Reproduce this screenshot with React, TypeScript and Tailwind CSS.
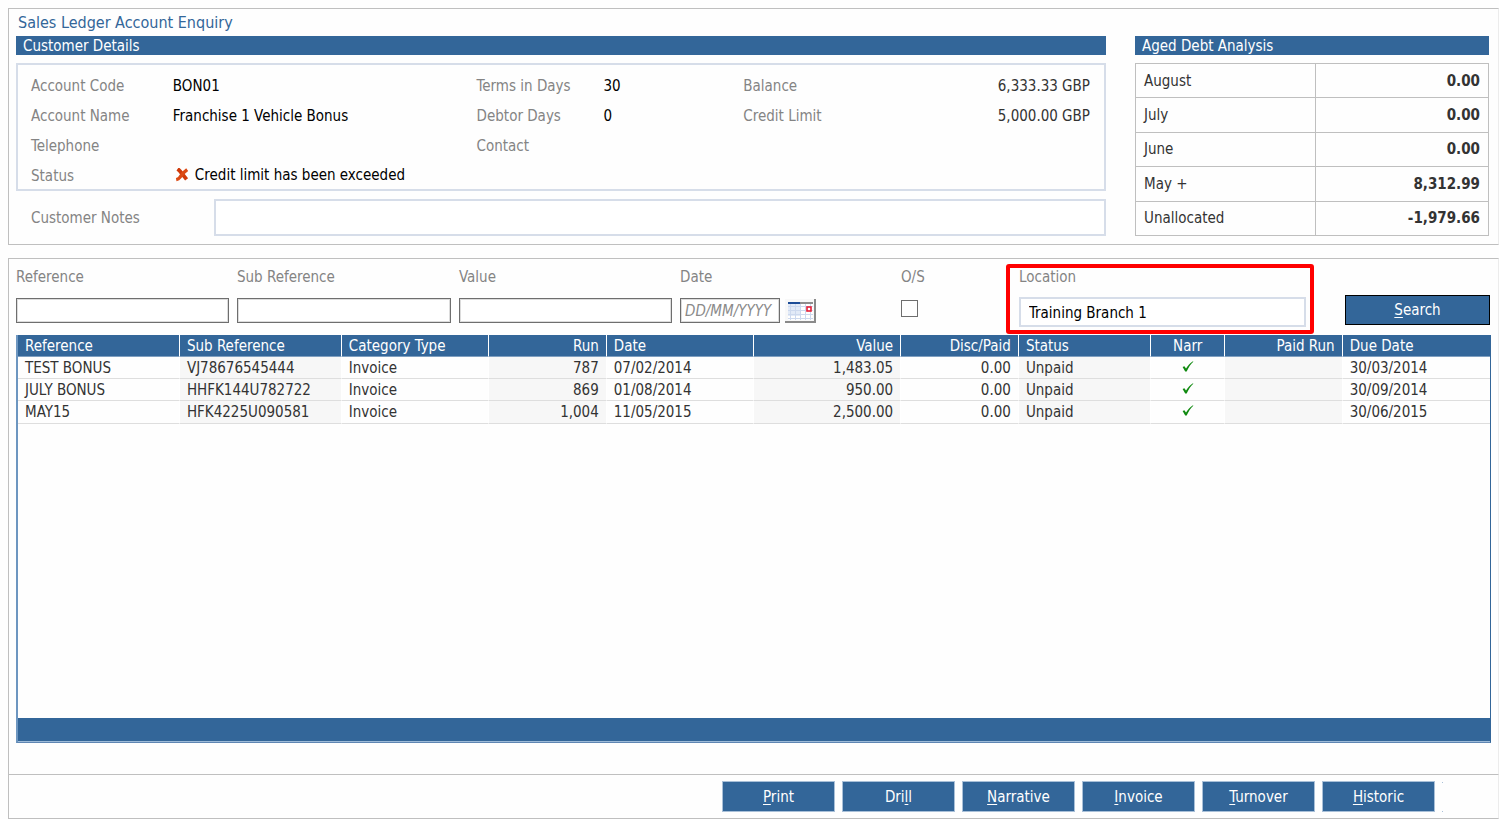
import React from "react";

type Row = {
  reference: string;
  sub: string;
  category: string;
  run: string;
  date: string;
  value: string;
  disc: string;
  status: string;
  due: string;
};

const rows: Row[] = [
  { reference: "TEST BONUS", sub: "VJ78676545444", category: "Invoice", run: "787", date: "07/02/2014", value: "1,483.05", disc: "0.00", status: "Unpaid", due: "30/03/2014" },
  { reference: "JULY BONUS", sub: "HHFK144U782722", category: "Invoice", run: "869", date: "01/08/2014", value: "950.00", disc: "0.00", status: "Unpaid", due: "30/09/2014" },
  { reference: "MAY15", sub: "HFK4225U090581", category: "Invoice", run: "1,004", date: "11/05/2015", value: "2,500.00", disc: "0.00", status: "Unpaid", due: "30/06/2015" },
];

const columns: { title: string; width: string; align: string }[] = [
  { title: "Reference", width: "w-[11%]", align: "text-left" },
  { title: "Sub Reference", width: "w-[11%]", align: "text-left" },
  { title: "Category Type", width: "w-[10%]", align: "text-left" },
  { title: "Run", width: "w-[8%]", align: "text-right" },
  { title: "Date", width: "w-[10%]", align: "text-left" },
  { title: "Value", width: "w-[10%]", align: "text-right" },
  { title: "Disc/Paid", width: "w-[8%]", align: "text-right" },
  { title: "Status", width: "w-[9%]", align: "text-left" },
  { title: "Narr", width: "w-[5%]", align: "text-center" },
  { title: "Paid Run", width: "w-[8%]", align: "text-right" },
  { title: "Due Date", width: "w-[10%]", align: "text-left" },
];

const agedDebt = [
  ["August", "0.00"],
  ["July", "0.00"],
  ["June", "0.00"],
  ["May +", "8,312.99"],
  ["Unallocated", "-1,979.66"],
];

const actions: [string, string, string][] = [
  ["", "P", "rint"],
  ["Dri", "l", "l"],
  ["", "N", "arrative"],
  ["", "I", "nvoice"],
  ["", "T", "urnover"],
  ["", "H", "istoric"],
];

function Cross() {
  return (
    <svg viewBox="0 0 14 14" className="h-[14px] w-[14px]" aria-hidden="true">
      <path d="M2.6 0.9 Q5 2.6 6.6 5.2 L11.6 11.4" stroke="#cf3a0a" strokeWidth="3.8" fill="none" />
      <path d="M12.2 1.6 Q7.4 5 4.8 9.4 Q3.6 11.2 1.2 11.6" stroke="#dc4a14" strokeWidth="3.4" fill="none" />
    </svg>
  );
}

function Tick() {
  return (
    <svg viewBox="0 0 12 11" className="mx-auto mb-[3px] block h-[11px] w-[12px]" role="img" aria-label="Yes">
      <path d="M0.6 6.1 L2.4 5.3 L4 7.6 C5.8 4.6 8 2.1 11 0.3 L11.3 0.7 C8.6 3.2 6.4 6.6 4.7 10.5 L3.2 10.5 Z" fill="#108a10" />
    </svg>
  );
}

function Calendar() {
  return (
    <svg viewBox="0 0 31 24" className="block h-[24px] w-[31px]" aria-hidden="true">
      <rect width="31" height="24" fill="#f8f8f8" />
      <rect x="3" y="5" width="25" height="16" fill="#ffffff" />
      <rect x="3" y="5" width="12" height="12" fill="#e2eaf7" />
      <path d="M5.5 5v16M10.5 5v16M15.5 5v16M20.5 5v16M25.5 5v16M3 7.5h25M3 11.5h25M3 15.5h25M3 19.5h25" stroke="#cdd9ee" strokeWidth="1" />
      <rect x="3" y="3" width="12" height="2" fill="#1c4c96" />
      <rect x="15" y="3" width="13" height="2" fill="#8c8c8c" />
      <rect x="22" y="8" width="4" height="4" fill="#fff" stroke="#e42038" strokeWidth="1.6" />
      <path d="M30 0v23M0 23h31" stroke="#8a8a8a" strokeWidth="2" />
    </svg>
  );
}

function Label({ htmlFor, children }: { htmlFor: string; children: React.ReactNode }) {
  return (
    <label htmlFor={htmlFor} className="block h-[20px] leading-[20px] text-[#848484]">
      {children}
    </label>
  );
}

const textBox = "block h-[25px] w-full border border-[#6e6e6e] bg-white px-1 outline-none inset-shadow-[0_0_0_1px_#dcdcdc]";

export default function App() {
  return (
    <main className="min-h-screen bg-[#fefefe] pt-2 pl-2 font-['DejaVu_Sans_Condensed','Noto_Sans',sans-serif] text-[15px] leading-[20px] text-[#333333]">
      <section className="border border-[#bfbfbf] border-r-[#ececec] pt-[4px] pr-[9px] pb-[8px] pl-[7px]">
        <h1 className="h-[23px] pl-[2px] text-[16px] leading-[20px] text-[#336699]">Sales Ledger Account Enquiry</h1>
        <div className="flex gap-[29px]">
          <div className="min-w-0 flex-1">
            <h2 className="h-[19px] bg-[#336699] pl-[7px] leading-[20px] text-white">Customer Details</h2>
            <dl className="mt-[8px] grid h-[128px] grid-cols-[142fr_304fr_127fr_140fr_140fr_207fr] grid-rows-[30px_30px_30px_30px] items-center border-2 border-[#d6dde9] pt-[6px] pr-[14px] pl-[13px] text-[#848484]">
              <dt>Account Code</dt>
              <dd className="text-black">BON01</dd>
              <dt>Terms in Days</dt>
              <dd className="text-black">30</dd>
              <dt>Balance</dt>
              <dd className="text-right text-[#333333]">6,333.33 GBP</dd>
              <dt>Account Name</dt>
              <dd className="text-black">Franchise 1 Vehicle Bonus</dd>
              <dt>Debtor Days</dt>
              <dd className="text-black">0</dd>
              <dt>Credit Limit</dt>
              <dd className="text-right text-[#333333]">5,000.00 GBP</dd>
              <dt>Telephone</dt>
              <dd />
              <dt>Contact</dt>
              <dd className="col-span-3" />
              <dt>Status</dt>
              <dd className="col-span-5 flex items-center gap-[6px] pb-[2px] pl-[2px] text-black">
                <Cross />
                Credit limit has been exceeded
              </dd>
            </dl>
            <div className="mt-[8px] flex items-center pl-[15px]">
              <label htmlFor="notes" className="w-[183px] text-[#848484]">Customer Notes</label>
              <input id="notes" className="h-[37px] min-w-0 flex-1 border-2 border-[#d6dde9] bg-white px-2 outline-none" />
            </div>
          </div>
          <div className="w-[354px]">
            <h2 className="h-[19px] bg-[#336699] pl-[7px] leading-[20px] text-white">Aged Debt Analysis</h2>
            <table className="mt-[8px] h-[173px] w-full table-fixed border-collapse">
              <tbody>
                {agedDebt.map(([label, amount]) => (
                  <tr key={label}>
                    <th scope="row" className="w-[51%] border border-[#bfbfbf] pl-[8px] text-left font-normal">{label}</th>
                    <td className="border border-[#bfbfbf] pr-[8px] text-right font-bold">{amount}</td>
                  </tr>
                ))}
              </tbody>
            </table>
          </div>
        </div>
      </section>

      <section className="mt-[13px] border-t border-r border-l border-[#bfbfbf] border-r-[#ececec] pt-[8px] pr-[7px] pb-[31px] pl-[7px]">
        <form className="grid h-[68px] grid-cols-[221fr_222fr_221fr_221fr_118fr_326fr_145fr] pr-px" onSubmit={(e) => e.preventDefault()}>
          <div className="min-w-0 pr-[8px]">
            <Label htmlFor="ref">Reference</Label>
            <input id="ref" className={`mt-[11px] ${textBox}`} />
          </div>
          <div className="min-w-0 pr-[8px]">
            <Label htmlFor="sub">Sub Reference</Label>
            <input id="sub" className={`mt-[11px] ${textBox}`} />
          </div>
          <div className="min-w-0 pr-[8px]">
            <Label htmlFor="val">Value</Label>
            <input id="val" className={`mt-[11px] ${textBox}`} />
          </div>
          <div className="min-w-0">
            <Label htmlFor="date">Date</Label>
            <div className="mt-[11px] flex gap-[5px]">
              <input id="date" placeholder="DD/MM/YYYY" className="h-[25px] w-[100px] border border-[#6e6e6e] bg-white px-[4px] outline-none inset-shadow-[0_0_0_1px_#dcdcdc] placeholder:text-[#8a8a8a] placeholder:italic" />
              <button type="button" aria-label="Choose date"><Calendar /></button>
            </div>
          </div>
          <div className="min-w-0">
            <Label htmlFor="os">O/S</Label>
            <input id="os" type="checkbox" className="mt-[13px] block h-[17px] w-[17px] appearance-none border border-[#6e6e6e] bg-white" />
          </div>
          <div className="relative min-w-0 pr-[39px]">
            <Label htmlFor="loc">Location</Label>
            <input id="loc" defaultValue="Training Branch 1" className="mt-[10px] block h-[30px] w-full border-2 border-[#d6dde9] bg-white px-[8px] pt-[2px] text-black outline-none" />
            <div className="pointer-events-none absolute -top-[3px] right-[31px] -left-[13px] h-[70px] rounded-[3px] border-4 border-[#ff0000]" />
          </div>
          <button type="submit" className="mt-[28px] h-[30px] border border-black bg-[#336699] text-white">
            <u className="underline-offset-2">S</u>earch
          </button>
        </form>

        <div className="flex h-[408px] flex-col border-r border-b border-l-2 border-r-[#336699] border-b-[#5f86b3] border-l-[#6d96c0] bg-[#fefefe]">
          <table className="w-full table-fixed border-separate border-spacing-0">
            <thead>
              <tr className="h-[22px] bg-[#336699] text-white">
                {columns.map((c) => (
                  <th key={c.title} scope="col" className={`${c.width} ${c.align} border-r border-b border-r-white border-b-[#7f9fc0] px-[7px] font-normal whitespace-nowrap last:border-r-0`}>
                    {c.title}
                  </th>
                ))}
              </tr>
            </thead>
            <tbody>
              {rows.map((r) => {
                const cells = [r.reference, r.sub, r.category, r.run, r.date, r.value, r.disc, r.status, <Tick />, "", r.due];
                return (
                  <tr key={r.reference} className="h-[22px] last:h-[23px]">
                    {cells.map((cell, i) => (
                      <td key={i} className={`${columns[i].align} border-r border-b border-r-white border-b-[#dedede] px-[7px] whitespace-nowrap last:border-r-0 even:bg-[#f7f7f7]`}>
                        {cell}
                      </td>
                    ))}
                  </tr>
                );
              })}
            </tbody>
          </table>
          <div className="mt-auto h-[24px] border-b border-[#9dbbd8] bg-[#336699]" />
        </div>
      </section>

      <footer className="flex h-[45px] items-center justify-end gap-[7px] border border-[#bfbfbf] border-r-[#ececec] pr-[55px]">
        {actions.map(([before, key, after]) => (
          <button key={key + after} type="button" className="h-[31px] w-[113px] border border-[#a9c0d8] bg-[#336699] text-white">
            {before}
            <u className="underline-offset-2">{key}</u>
            {after}
          </button>
        ))}
        <div className="h-[30px] w-px border-y border-[#a9c0d8]" />
      </footer>
    </main>
  );
}
